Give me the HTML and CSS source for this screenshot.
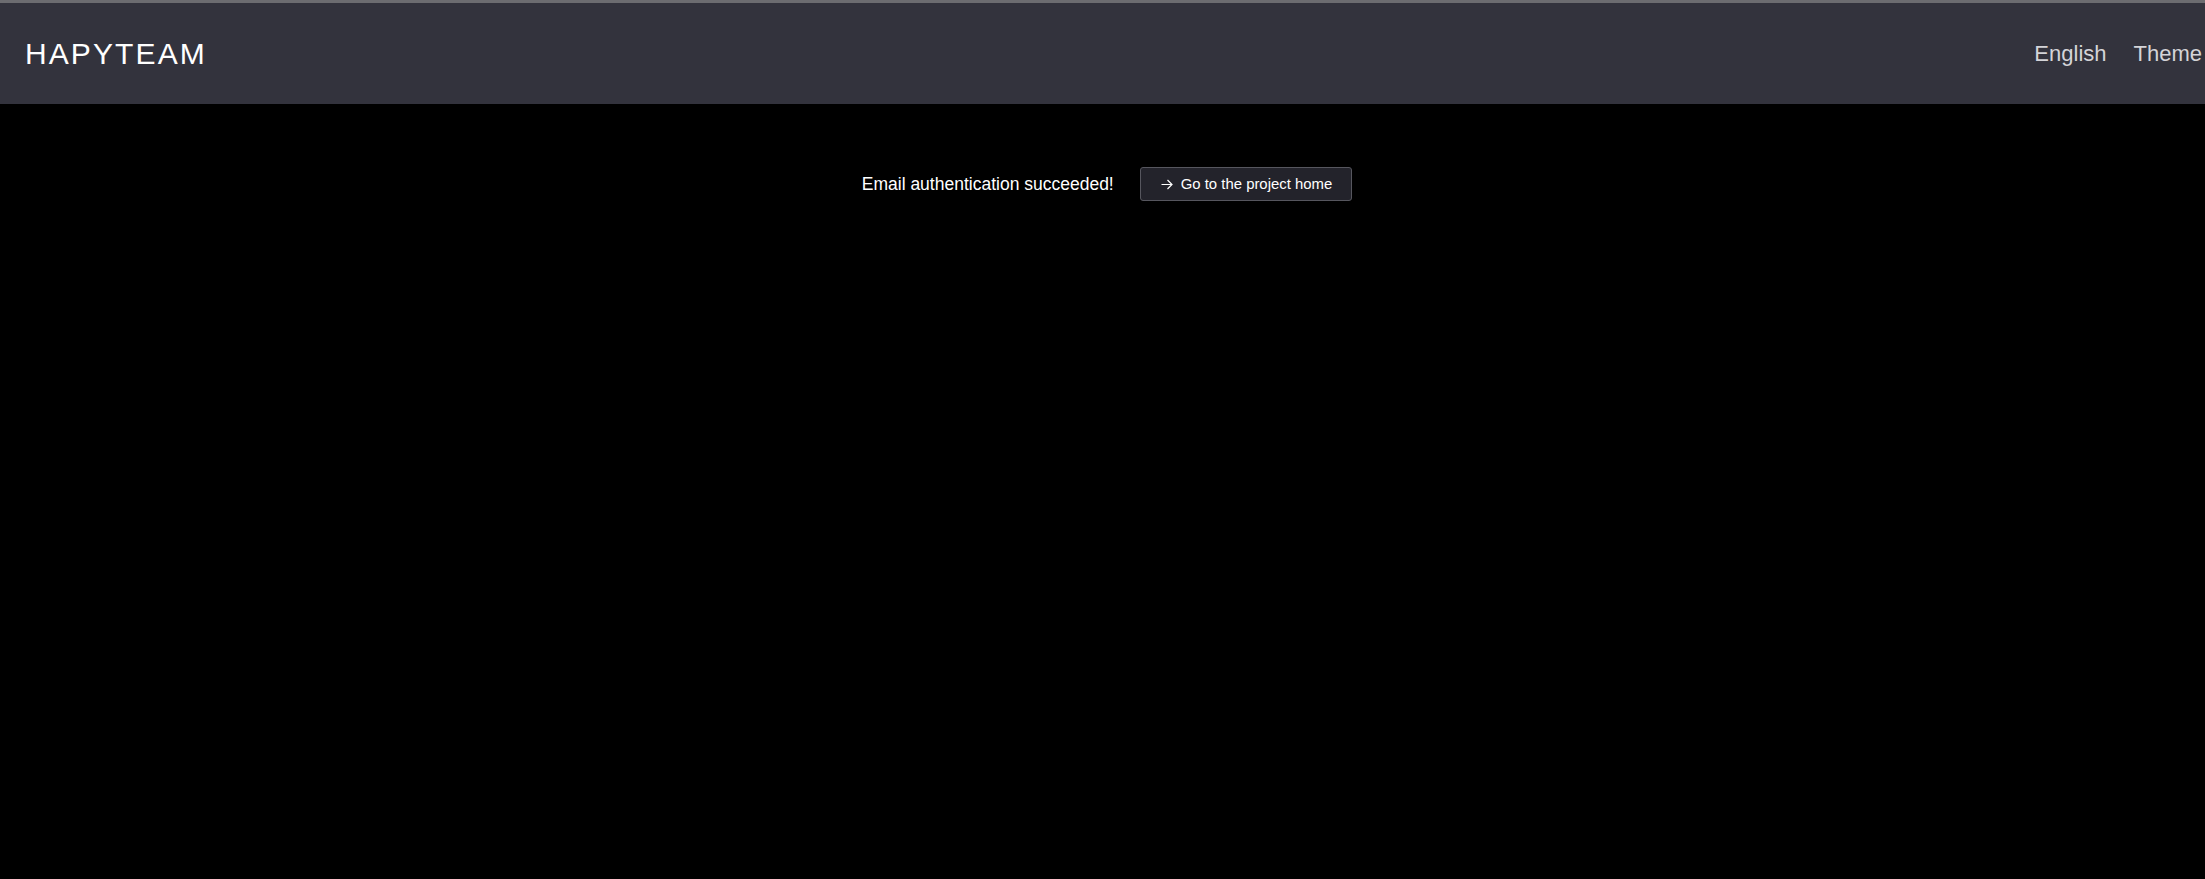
FILE: index.html
```html
<!DOCTYPE html>
<html lang="en">
  <head>
    <meta charset="utf-8" />
    <meta name="viewport" content="width=device-width, initial-scale=1" />
    <title>HAPYTEAM</title>
    <link rel="stylesheet" href="styles.css">
  </head>
  <body>
    <header class="site-header">
      <a href="/" class="logo">HAPYTEAM</a>
      <nav class="nav">
        <a href="#" class="nav-link">English</a>
        <a href="#" class="nav-link">Theme</a>
      </nav>
    </header>

    <main class="content">
      <div class="auth-result">
        <span class="auth-message">Email authentication succeeded!</span>
        <a href="/" class="home-btn">
          <svg class="arrow" width="12" height="11" viewBox="0 0 12 11" aria-hidden="true">
            <path d="M0.5 5.5H11M6.5 1L11 5.5L6.5 10" fill="none" stroke="#fff" stroke-width="1.2" />
          </svg>
          Go to the project home
        </a>
      </div>
    </main>
  </body>
</html>
```

FILE: styles.css
```css
* {
  box-sizing: border-box;
}

html,
body {
  margin: 0;
  padding: 0;
}

body {
  font-family: "Liberation Sans", Arial, sans-serif;
  background: #000;
  color: #fff;
  min-height: 100vh;
  border-top: 3px solid #6c6c70;
}

.site-header {
  display: flex;
  align-items: center;
  justify-content: space-between;
  height: 101px;
  padding: 0 3px 0 25px;
  background: #33333d;
}
.logo {
  font-size: 30px;
  letter-spacing: 2.1px;
  color: #fff;
  text-decoration: none;
}
.nav {
  display: flex;
  gap: 27px;
}
.nav-link {
  font-size: 22px;
  color: #d4d4d8;
  text-decoration: none;
}

.content {
  padding-top: 63px;
}
.auth-result {
  display: flex;
  align-items: center;
  justify-content: center;
  gap: 26px;
  padding-left: 9px;
}
.auth-message {
  font-size: 17.5px;
}
.home-btn {
  display: inline-flex;
  align-items: center;
  gap: 8px;
  height: 34px;
  padding: 0 19px 0 20px;
  background: #23232b;
  border: 1px solid #56565e;
  border-radius: 3px;
  color: #fff;
  font-size: 14.9px;
  text-decoration: none;
}
.arrow {
  display: block;
}
```
